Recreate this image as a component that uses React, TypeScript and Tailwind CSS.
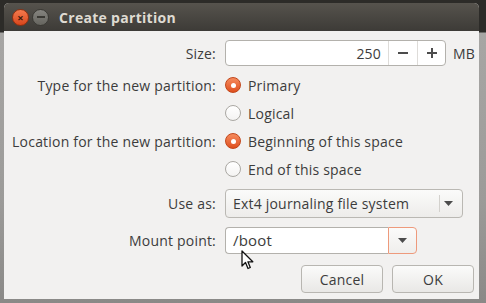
import React from 'react';

const font = { fontFamily: '"Open Sans", "Noto Sans", "DejaVu Sans", sans-serif' };

function Radio({ checked }: { checked: boolean }) {
  return checked ? (
    <span className="flex h-[16px] w-[16px] items-center justify-center rounded-full border border-[#c2461a] bg-gradient-to-b from-[#f58a5c] to-[#df4f1c]">
      <span className="h-[5px] w-[5px] rounded-full bg-white" />
    </span>
  ) : (
    <span className="h-[16px] w-[16px] rounded-full border border-[#aaa8a3] bg-gradient-to-b from-white to-[#f4f3f2]" />
  );
}

function Row({ label, children, className }: { label?: string; children: React.ReactNode; className: string }) {
  return (
    <div className={`flex items-center ${className}`}>
      <div className="w-[221px] shrink-0 pr-[9px] text-right">{label}</div>
      <div className="flex items-center">{children}</div>
    </div>
  );
}

function Arrow() {
  return (
    <svg width="9" height="5" viewBox="0 0 9 5">
      <path d="M0 0 L9 0 L4.5 5 Z" fill="#4c4c4c" />
    </svg>
  );
}

export default function App() {
  return (
    <div
      className="relative h-[303px] w-[486px] overflow-hidden bg-[linear-gradient(to_bottom,#2c2b28_0px,#2c2b28_32px,#a7a6a4_33px,#9c9b99_200px,#8a8987_303px)] pl-[4px] pt-[3px]"
      style={font}
    >
      <div className="flex h-[296px] w-[475px] flex-col overflow-hidden rounded-t-[5px] bg-[#f2f1f0] text-[14px] tracking-[0.2px] text-[#3c3c3c]">
        {/* title bar */}
        <div className="flex h-[28px] shrink-0 items-center bg-gradient-to-b from-[#56534d] to-[#3d3b37] pl-[8px]">
          <span className="flex h-[17px] w-[17px] items-center justify-center rounded-full border border-[#8e2f10] bg-gradient-to-b from-[#f47a4d] to-[#d8451a] text-[11px] font-bold leading-none text-[#3b1a0c]">
            ×
          </span>
          <span className="ml-[3px] flex h-[17px] w-[17px] items-center justify-center rounded-full border border-[#3a3934] bg-gradient-to-b from-[#85847f] to-[#66655f]">
            <span className="h-[2px] w-[8px] bg-[#3a3934]" />
          </span>
          <span className="ml-[10px] text-[14px] font-bold tracking-[0.3px] text-[#dfdbd2]">Create partition</span>
        </div>

        <div className="flex flex-col pt-[9px]">
          <Row label="Size:" className="h-[26px]">
            <div className="flex h-[26px] w-[221px] items-stretch rounded-[4px] border border-[#b3b1ac] bg-white">
              <div className="flex flex-1 items-center justify-end pr-[7px]">250</div>
              <div className="flex w-[29px] items-center justify-center border-l border-[#dedcd9]">
                <span className="h-[2px] w-[10px] bg-[#4c4c4c]" />
              </div>
              <div className="relative flex w-[28px] items-center justify-center border-l border-[#dedcd9]">
                <span className="h-[2px] w-[10px] bg-[#4c4c4c]" />
                <span className="absolute h-[10px] w-[2px] bg-[#4c4c4c]" />
              </div>
            </div>
            <span className="ml-[7px]">MB</span>
          </Row>
          <Row label="Type for the new partition:" className="mt-[5px] h-[28px]">
            <Radio checked />
            <span className="ml-[7px]">Primary</span>
          </Row>
          <Row className="h-[28px]">
            <Radio checked={false} />
            <span className="ml-[7px]">Logical</span>
          </Row>
          <Row label="Location for the new partition:" className="h-[28px]">
            <Radio checked />
            <span className="ml-[7px]">Beginning of this space</span>
          </Row>
          <Row className="h-[28px]">
            <Radio checked={false} />
            <span className="ml-[7px]">End of this space</span>
          </Row>
          <Row label="Use as:" className="mt-[6px] h-[29px]">
            <div className="flex h-[29px] w-[238px] items-center rounded-[4px] border border-[#bab8b3] bg-gradient-to-b from-[#fbfbfa] to-[#edecea]">
              <span className="flex-1 pl-[7px]">Ext4 journaling file system</span>
              <span className="h-[17px] w-px bg-[#d3d1cd]" />
              <span className="flex w-[18px] justify-center pr-[1px]">
                <Arrow />
              </span>
              <span className="w-[4px]" />
            </div>
          </Row>
          <Row label="Mount point:" className="mt-[9px] h-[27px]">
            <div className="flex h-[27px] w-[192px] items-stretch">
              <div className="flex flex-1 items-center rounded-l-[4px] border border-r-0 border-[#b3b1ac] bg-white pl-[7px] text-[15px]">
                /boot
              </div>
              <div className="flex w-[29px] items-center justify-center rounded-r-[4px] border border-[#ee9a7c] bg-gradient-to-b from-[#fbfbfa] to-[#efeeec]">
                <Arrow />
              </div>
            </div>
          </Row>
          <div className="mt-[11px] flex h-[28px] justify-end gap-[9px] pr-[5px]">
            <button className="w-[82px] rounded-[4px] border border-[#b8b6b1] bg-gradient-to-b from-[#fbfbfa] to-[#e9e8e6]">
              Cancel
            </button>
            <button className="w-[82px] rounded-[4px] border border-[#b8b6b1] bg-gradient-to-b from-[#fbfbfa] to-[#e9e8e6]">
              OK
            </button>
          </div>
        </div>
      </div>

      {/* mouse pointer */}
      <svg className="absolute left-[241px] top-[250px]" width="13" height="20" viewBox="0 0 13 20">
        <path d="M1 1 L1 16 L4.5 12.5 L7 18.5 L9.3 17.5 L6.9 11.8 L11.8 11.8 Z" fill="#ffffff" stroke="#111" strokeWidth="1.3" strokeLinejoin="round" />
      </svg>
    </div>
  );
}
